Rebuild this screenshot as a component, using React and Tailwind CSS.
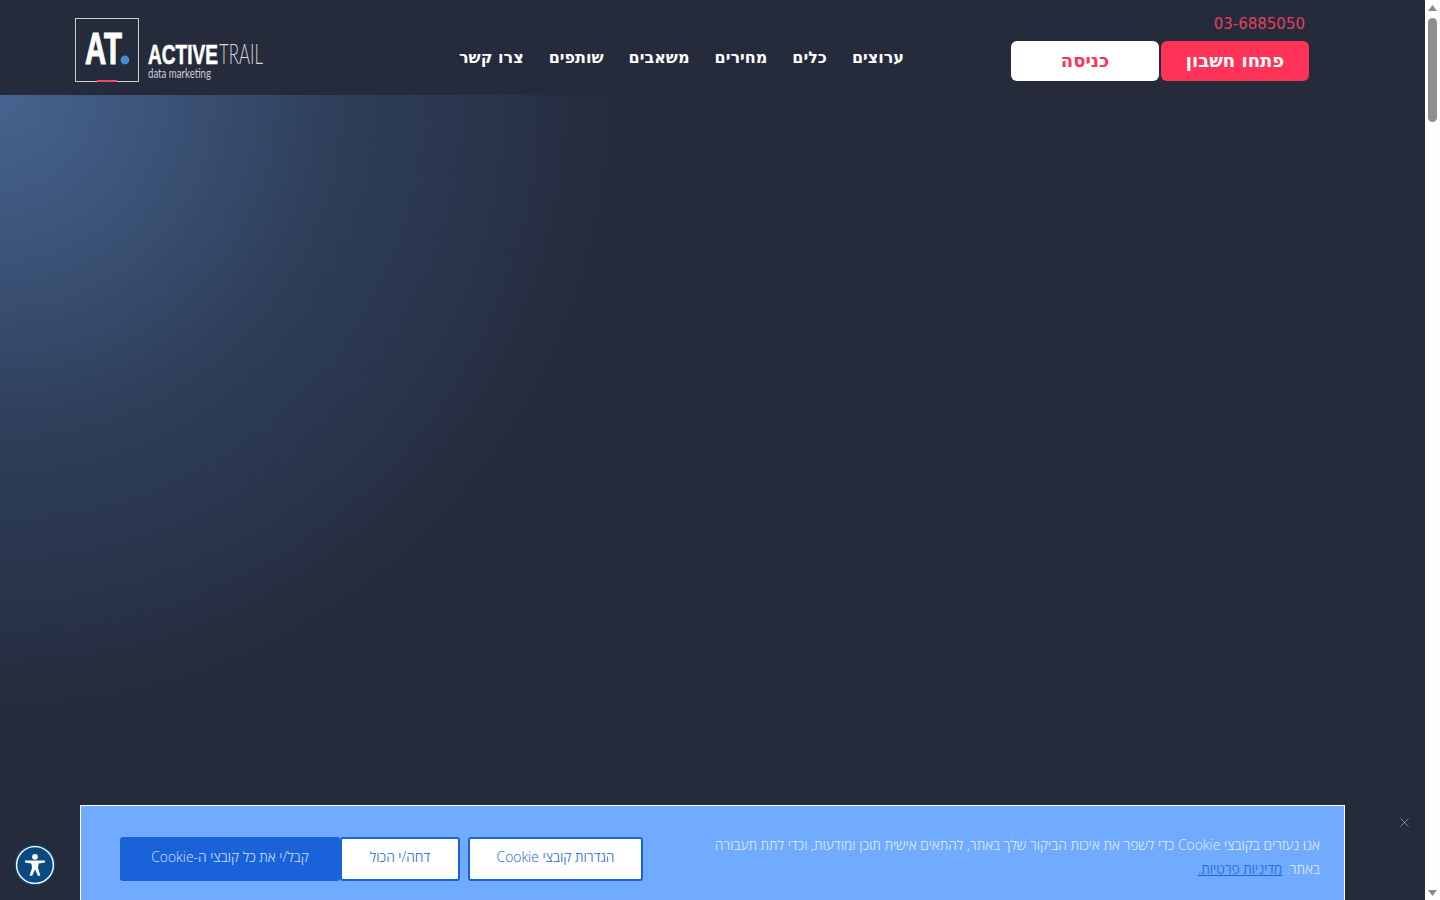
import { X } from 'lucide-react'

const navItems = ['ערוצים', 'כלים', 'מחירים', 'משאבים', 'שותפים', 'צרו קשר']

function Logo() {
  return (
    <svg width="190" height="66" viewBox="0 0 190 66" className="block overflow-visible">
      <rect x="0.5" y="0.5" width="63" height="63" fill="none" stroke="#c9ccd2" strokeWidth="1" />
      <rect x="22" y="62" width="20" height="2" fill="#f0476a" />
      <text x="10" y="46" fontFamily="'Liberation Sans', sans-serif" fontWeight="700" fontSize="45" fill="#fff" stroke="#fff" strokeWidth="1.2" textLength="37" lengthAdjust="spacingAndGlyphs">AT</text>
      <circle cx="50" cy="42" r="4.4" fill="#3f8fd8" />
      <text x="73" y="46" fontFamily="'Liberation Sans', sans-serif" fontWeight="700" fontSize="28" fill="#fff" stroke="#fff" strokeWidth="0.6" textLength="70" lengthAdjust="spacingAndGlyphs">ACTIVE</text>
      <text x="144" y="46" fontFamily="Lato, sans-serif" fontWeight="300" fontSize="27" fill="#d4d6da" textLength="44" lengthAdjust="spacingAndGlyphs">TRAIL</text>
      <text x="73" y="60" fontFamily="Lato, sans-serif" fontWeight="400" fontSize="14" fill="#c9ccd2" textLength="63" lengthAdjust="spacingAndGlyphs">data marketing</text>
    </svg>
  )
}

function AccessibilityIcon() {
  return (
    <svg width="42" height="42" viewBox="0 0 42 42" className="block">
      <circle cx="21" cy="21" r="20.5" fill="#0b4a7e" />
      <circle cx="21" cy="21" r="18.4" fill="none" stroke="#fff" strokeWidth="1.4" />
      <circle cx="21" cy="12.8" r="2.9" fill="#fff" />
      <path d="M11 16.6 L31 16.6 L31 18.6 L24.6 19.4 L24 24 L26.4 31.4 L24 32 L21 25.6 L18 32 L15.6 31.4 L18 24 L17.4 19.4 L11 18.6 Z" fill="#fff" />
    </svg>
  )
}

function Scrollbar() {
  return (
    <div className="w-[15px] shrink-0 h-[900px] bg-white flex flex-col items-center">
      <div className="h-[15px] flex items-center justify-center">
        <svg width="9" height="6" viewBox="0 0 9 6"><path d="M4.5 0 L9 6 H0 Z" fill="#8a8a8a" /></svg>
      </div>
      <div className="w-[9px] h-[104px] mt-[3px] rounded-[5px] bg-[#8f8f8f]" />
      <div className="flex-1" />
      <div className="h-[15px] flex items-center justify-center">
        <svg width="9" height="6" viewBox="0 0 9 6"><path d="M0 0 H9 L4.5 6 Z" fill="#8a8a8a" /></svg>
      </div>
    </div>
  )
}

export default function App() {
  return (
    <div className="relative flex h-[900px] w-[1440px] overflow-hidden bg-[#252b3b] font-['Open_Sans',sans-serif]">
      <main className="flex-1 flex flex-col min-w-0">
        <header dir="ltr" className="h-[95px] shrink-0 flex items-start pl-[75px] bg-[#252b3b]">
          <div className="mt-[18px] w-[383px] shrink-0">
            <Logo />
          </div>
          <nav dir="rtl" className="mt-[46px] w-[446px] flex justify-start gap-[25px] text-white font-bold text-[16px] leading-6 font-['DejaVu_Sans',sans-serif]">
            {navItems.map(item => (
              <a key={item} href="#" className="whitespace-nowrap">{item}</a>
            ))}
          </nav>
          <div className="ml-[107px] w-[298px] flex flex-col items-end">
            <div className="mt-[14px] mr-[4px] h-5 text-[15px] leading-5 text-[#e33e62] font-['DejaVu_Sans',sans-serif]">03-6885050</div>
            <div className="mt-[7px] flex gap-[2px] font-['DejaVu_Sans',sans-serif] font-bold text-[18px]">
              <button className="w-[148px] h-10 pb-[2px] rounded-md bg-white text-[#ff3358]">כניסה</button>
              <button className="w-[148px] h-10 pb-[2px] rounded-md bg-[#ff3358] text-white">פתחו חשבון</button>
            </div>
          </div>
        </header>
        <section className="flex-1 bg-[radial-gradient(circle_640px_at_0px_0px,#45648f_0%,#3c5378_25%,#2e3f5a_52%,#2a354c_75%,#232a3a_99%,#252b3b_100%)]" />
      </main>
      <Scrollbar />

      <div dir="rtl" className="absolute left-[80px] top-[805px] w-[1265px] h-[95px] flex items-start justify-between bg-[#70abff] border border-white border-b-0 font-['Open_Sans',sans-serif] text-[13.85px] font-light">
        <p className="mr-[24px] mt-[27px] leading-6 text-[#e3eeff]">
          <span className="block whitespace-nowrap">אנו נעזרים בקובצי Cookie כדי לשפר את איכות הביקור שלך באתר, להתאים אישית תוכן ומודעות, וכדי לתת תעבורה</span>
          <span className="flex gap-1">
            <span>באתר.</span>
            <a href="#" className="underline text-[#1a62d9]">מדיניות פרטיות.</a>
          </span>
        </p>
        <div className="flex mt-[31px] ml-[39px] h-11">
          <button className="w-[175px] pb-1 border-2 border-[#1a62d9] rounded-[3px] bg-white text-[#1a62d9]">הגדרות קובצי Cookie</button>
          <button className="w-[120px] mr-[8px] pb-1 border-2 border-[#1a62d9] rounded-[3px] bg-white text-[#1a62d9]">דחה/י הכול</button>
          <button className="w-[220px] pb-1 rounded-[3px] bg-[#1a62d9] text-[#cfe0ff]">קבל/י את כל קובצי ה-Cookie</button>
        </div>
      </div>

      <button className="absolute left-[1397px] top-[815px] text-[#a0a5af]" aria-label="סגור">
        <X size={15} strokeWidth={1.2} />
      </button>
      <div className="absolute left-[14px] top-[844px]">
        <AccessibilityIcon />
      </div>
    </div>
  )
}
